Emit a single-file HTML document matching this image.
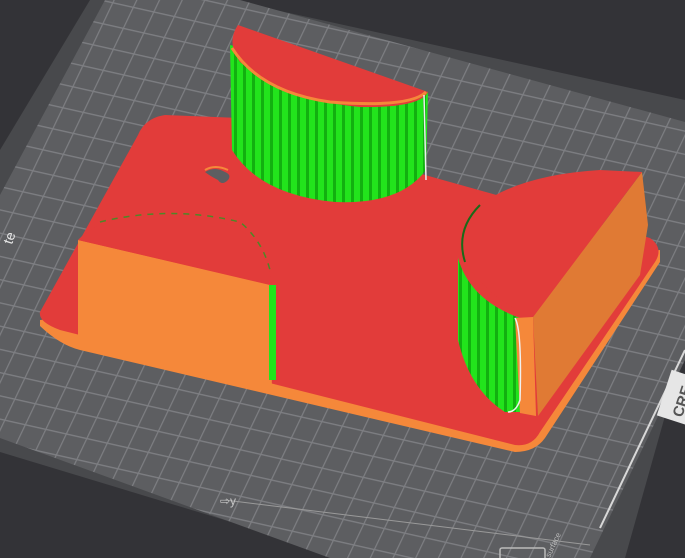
<!DOCTYPE html>
<html><head><meta charset="utf-8"><style>
html,body{margin:0;padding:0;background:#333337;overflow:hidden}
svg{display:block}
text{font-family:"Liberation Sans",sans-serif}
</style></head><body>
<svg width="685" height="558" viewBox="0 0 685 558" xmlns="http://www.w3.org/2000/svg">
<defs>
<pattern id="grid" patternUnits="userSpaceOnUse" width="1" height="1" patternTransform="matrix(20.5 4.6 -10 21 0 0)">
<rect width="1" height="1" fill="#5d5e61"/>
<rect width="1" height="0.06" fill="#7d7e82"/>
<rect width="0.06" height="1" fill="#7d7e82"/>
</pattern>
<pattern id="stripes" patternUnits="userSpaceOnUse" width="9" height="10">
<rect width="9" height="10" fill="#22e41c"/>
<rect width="3" height="10" fill="#12b010"/>
</pattern>
</defs>
<rect width="685" height="558" fill="#333337"/>
<polygon points="90,0 230,0 685,100 685,345 625,558 350,558 0,452 0,150" fill="#48494c"/>
<polygon points="105,0 240,0 685,122 685,360 590,558 330,558 0,438 0,195" fill="url(#grid)"/>
<line x1="600" y1="528" x2="685" y2="350" stroke="#d8d8d8" stroke-width="2"/>
<line x1="225" y1="500" x2="590" y2="545" stroke="#9a9a9a" stroke-width="1"/>
<path d="M40,320 L40,326 Q60,345 80,350 L515,452 Q535,452 545,438 L660,262 L660,250 Z" fill="#f5883a"/>
<path d="M165,115 Q145,118 138,135 L40,312 Q38,322 60,330 L515,445 Q532,447 540,432 L655,262 Q664,248 650,238 L400,168 L240,118 Z" fill="#e23c3a"/>
<path d="M205,172 Q215,166 225,172 Q232,175 228,180 Q222,186 218,180 Q210,176 205,172Z" fill="#5d5e61"/>
<path d="M205,170 Q215,164 228,170" stroke="#f5883a" stroke-width="2" fill="none"/>
<polygon points="78,240 270,285 272,390 78,346" fill="#f5883a"/>
<path d="M78,240 Q100,215 170,212 Q240,218 266,252 L272,285 Z" fill="#e23c3a"/>
<path d="M100,222 Q170,205 240,222 Q262,240 270,270" stroke="#2a9a22" stroke-width="1.5" stroke-dasharray="6,6" fill="none" opacity="0.8"/>
<rect x="269" y="285" width="7" height="95" fill="#22e41c"/>
<path d="M230,45 L428,92 L426,170 Q400,205 335,202 Q260,195 232,150 Z" fill="url(#stripes)"/>
<path d="M238,25 L428,92 Q420,108 360,107 Q285,100 240,62 Q226,42 238,25 Z" fill="#e23c3a"/>
<path d="M232,48 Q260,92 330,102 Q410,108 426,92" stroke="#f5883a" stroke-width="3" fill="none"/>
<path d="M424,95 L426,180" stroke="#f0f0f0" stroke-width="1.5" fill="none"/>
<path d="M458,258 Q470,300 520,318 L520,412 L505,412 Q470,390 458,340 Z" fill="url(#stripes)"/>
<polygon points="642,172 648,225 640,275 538,416 533,317" fill="#e07a34"/>
<polygon points="515,318 533,317 536,416 520,413" fill="#f5883a"/>
<path d="M533,317 Q490,300 465,262 Q455,230 480,205 Q520,175 600,170 L642,172 Z" fill="#e23c3a"/>
<path d="M465,262 Q455,230 480,205" stroke="#1a6a18" stroke-width="2" fill="none"/>
<path d="M515,318 Q522,330 520,400 Q516,412 508,412" stroke="#f0f0f0" stroke-width="1.5" fill="none"/>
<text x="0" y="0" transform="translate(12,245) rotate(-72)" fill="#e8e8e8" font-size="14">te</text>
<rect x="664" y="372" width="30" height="48" fill="#e6e6e6" transform="rotate(18 675 395)"/>
<text x="0" y="0" transform="translate(682,418) rotate(-72)" fill="#555" font-size="15" font-weight="bold">CRE</text>
<text x="220" y="505" fill="#c8c8c8" font-size="12">⇨y</text>
<text x="0" y="0" transform="translate(550,558) rotate(-65)" fill="#bbb" font-size="8">surface</text>
<rect x="500" y="548" width="45" height="12" fill="none" stroke="#bbb" stroke-width="1.5" rx="2"/>
</svg>
</body></html>
